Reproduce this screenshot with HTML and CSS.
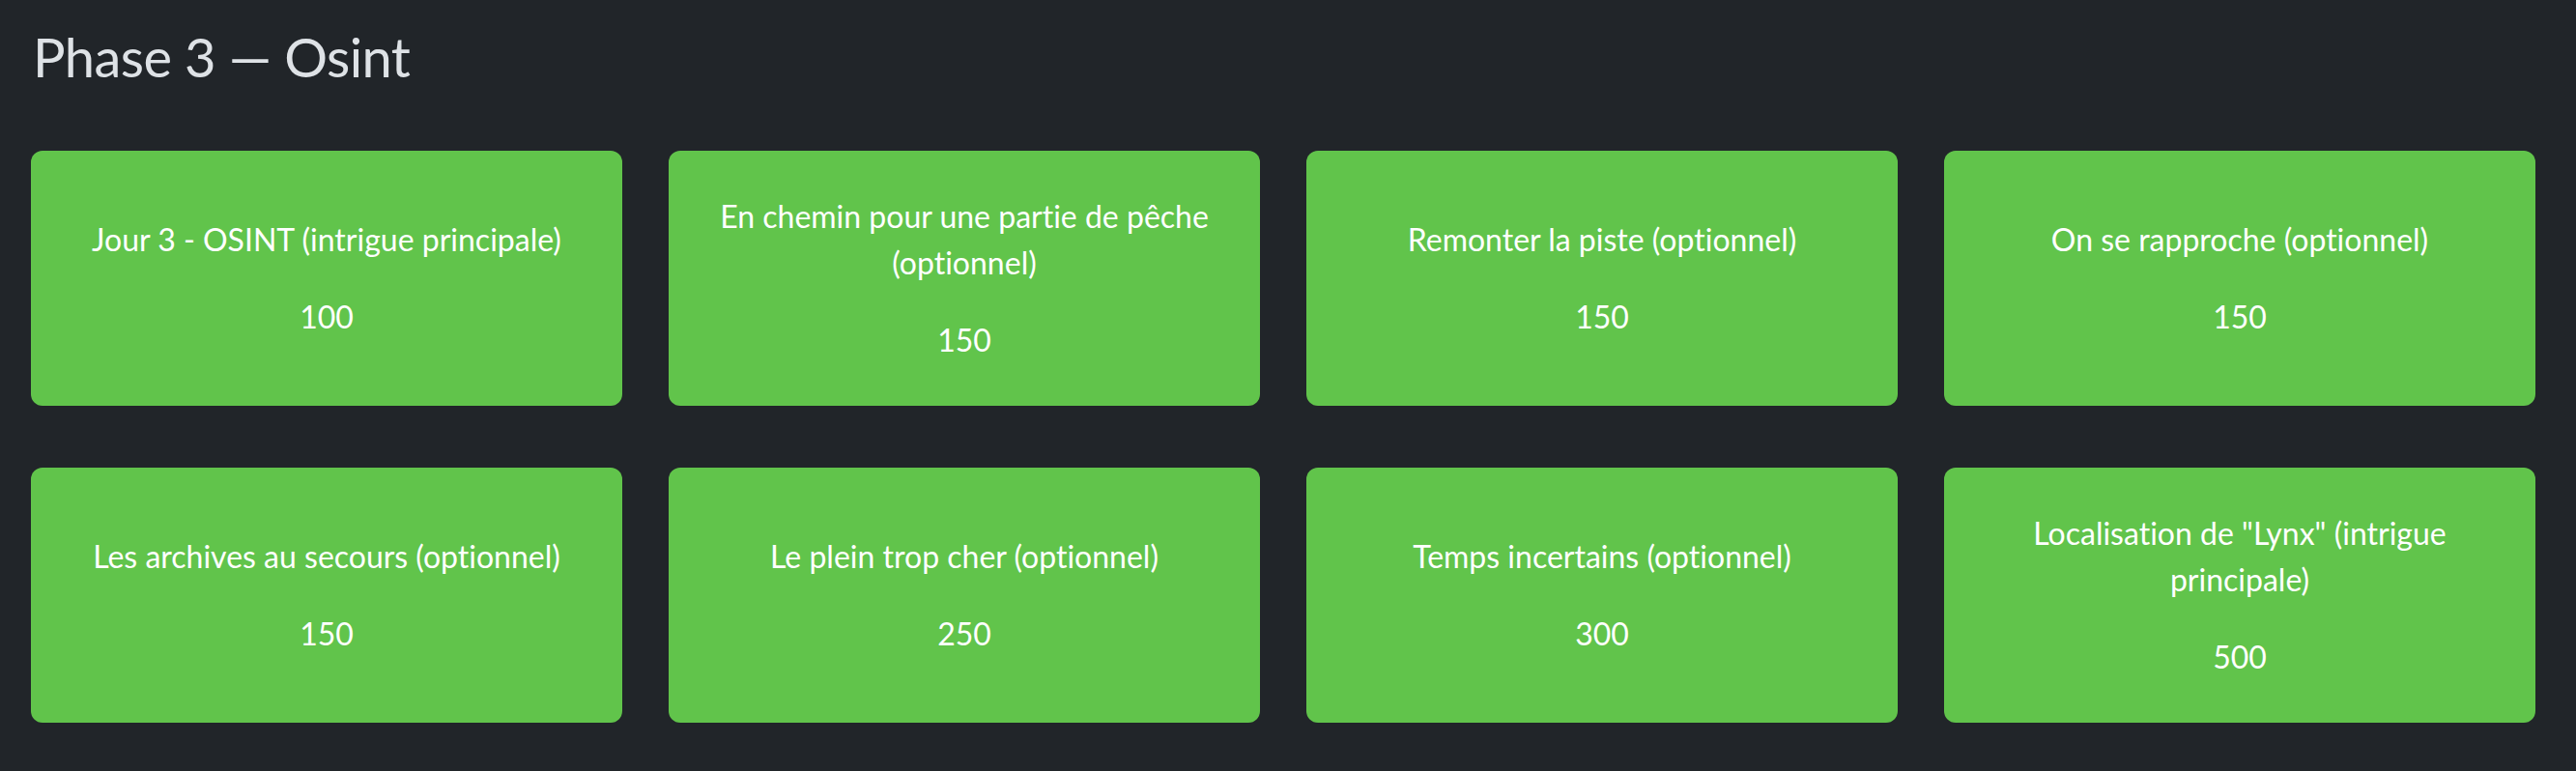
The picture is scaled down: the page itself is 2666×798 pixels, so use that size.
FILE: index.html
```html
<!DOCTYPE html>
<html lang="fr">
<head>
<meta charset="utf-8">
<title>Phase 3 — Osint</title>
<link rel="stylesheet" href="styles.css">
</head>
<body>
<main class="page">
  <h1 class="phase-title">Phase 3 — Osint</h1>
  <div class="challenge-grid">
    <button class="challenge"><span class="challenge-name">Jour 3 - OSINT (intrigue principale)</span><span class="challenge-value">100</span></button>
    <button class="challenge"><span class="challenge-name">En chemin pour une partie de pêche (optionnel)</span><span class="challenge-value">150</span></button>
    <button class="challenge"><span class="challenge-name">Remonter la piste (optionnel)</span><span class="challenge-value">150</span></button>
    <button class="challenge"><span class="challenge-name">On se rapproche (optionnel)</span><span class="challenge-value">150</span></button>
    <button class="challenge"><span class="challenge-name">Les archives au secours (optionnel)</span><span class="challenge-value">150</span></button>
    <button class="challenge"><span class="challenge-name">Le plein trop cher (optionnel)</span><span class="challenge-value">250</span></button>
    <button class="challenge"><span class="challenge-name">Temps incertains (optionnel)</span><span class="challenge-value">300</span></button>
    <button class="challenge"><span class="challenge-name">Localisation de "Lynx" (intrigue principale)</span><span class="challenge-value">500</span></button>
  </div>
</main>
</body>
</html>
```

FILE: styles.css
```css
html, body {
  margin: 0;
  padding: 0;
  background: #212529;
  height: 100%;
}

body {
  font-family: Lato, "Open Sans", "Liberation Sans", sans-serif;
  color: #dee2e6;
  font-variant-ligatures: no-common-ligatures;
}

.page {
  padding: 25px 42px 0 32px;
}

.phase-title {
  margin: 0 0 64px 2px;
  font-size: 56px;
  font-weight: 400;
  line-height: 1.2;
  letter-spacing: -0.6px;
  color: #dee2e6;
}

.challenge-grid {
  display: grid;
  grid-template-columns: repeat(4, 1fr);
  column-gap: 48px;
  row-gap: 64px;
}

.challenge {
  display: flex;
  flex-direction: column;
  align-items: center;
  justify-content: center;
  gap: 32px;
  height: 264px;
  padding: 0 28px;
  border: none;
  border-radius: 12px;
  background: #61c44b;
  color: #ffffff;
  font-family: inherit;
  font-size: 32px;
  line-height: 48px;
  font-variant-ligatures: no-common-ligatures;
  text-align: center;
  cursor: pointer;
}

.challenge-name,
.challenge-value {
  display: block;
}
```
